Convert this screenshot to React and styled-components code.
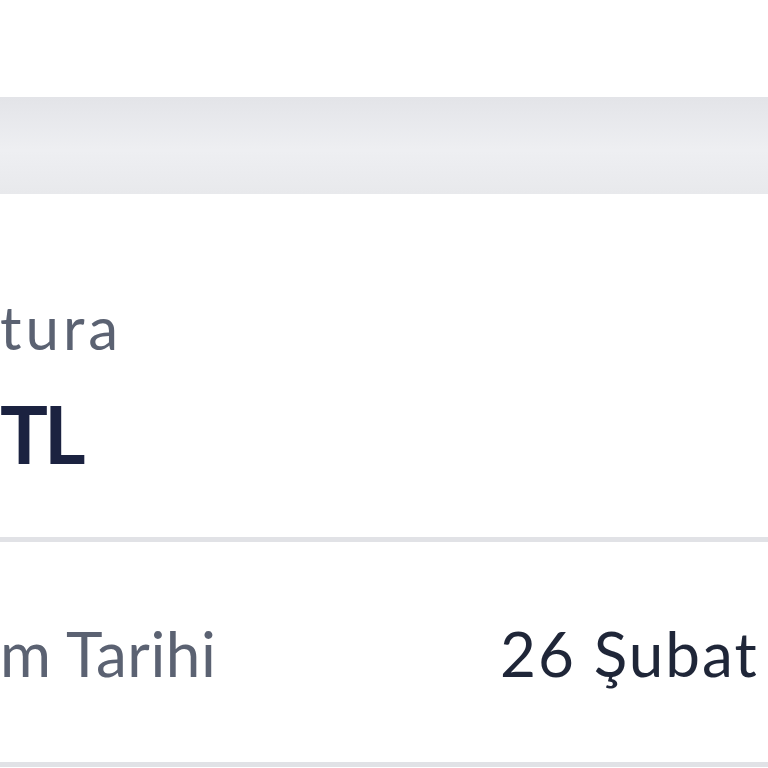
import React from "react";
import styled, { createGlobalStyle } from "styled-components";

const GlobalStyles = createGlobalStyle`
  html, body {
    margin: 0;
    padding: 0;
    background: #ffffff;
  }
  body {
    font-family: Lato, "Noto Sans", "Liberation Sans", sans-serif;
  }
`;

const Page = styled.div`
  width: 768px;
  height: 768px;
  overflow: hidden;
  background: #ffffff;
  display: flex;
  flex-direction: column;
`;

const TopSpace = styled.div`
  height: 97px;
  flex-shrink: 0;
`;

const Band = styled.div`
  height: 97px;
  flex-shrink: 0;
  background: linear-gradient(
    to bottom,
    #e3e4e8 0%,
    #e7e8ec 20%,
    #eeeff2 55%,
    #e8e9ec 100%
  );
`;

const Summary = styled.div`
  height: 343px;
  flex-shrink: 0;
  display: flex;
  flex-direction: column;
  padding-top: 103px;
  box-sizing: border-box;
`;

const Caption = styled.div`
  font-size: 60px;
  line-height: 1;
  color: #5b6272;
  white-space: nowrap;
  letter-spacing: 4px;
`;

const Amount = styled.div`
  margin-top: 36px;
  font-size: 80px;
  font-weight: 700;
  line-height: 1;
  color: #1b2240;
  white-space: nowrap;
  letter-spacing: -4px;
`;

const Divider = styled.div`
  height: 5px;
  flex-shrink: 0;
  background: #e1e2e6;
`;

const InfoRow = styled.div`
  height: 220px;
  flex-shrink: 0;
  display: flex;
  align-items: center;
  box-sizing: border-box;
  padding-top: 2px;
`;

const Label = styled.div`
  flex: 1;
  font-size: 62px;
  line-height: 1;
  color: #5b6272;
  white-space: nowrap;
  letter-spacing: 0.5px;
`;

const Value = styled.div`
  width: 268px;
  flex-shrink: 0;
  font-size: 62px;
  line-height: 1;
  color: #1f2638;
  white-space: nowrap;
  letter-spacing: 2px;
`;

export default function App() {
  return (
    <>
      <GlobalStyles />
      <Page>
        <TopSpace />
        <Band />
        <Summary>
          <Caption>tura</Caption>
          <Amount>TL</Amount>
        </Summary>
        <Divider />
        <InfoRow>
          <Label>m Tarihi</Label>
          <Value>26 Şubat</Value>
        </InfoRow>
        <Divider />
      </Page>
    </>
  );
}
